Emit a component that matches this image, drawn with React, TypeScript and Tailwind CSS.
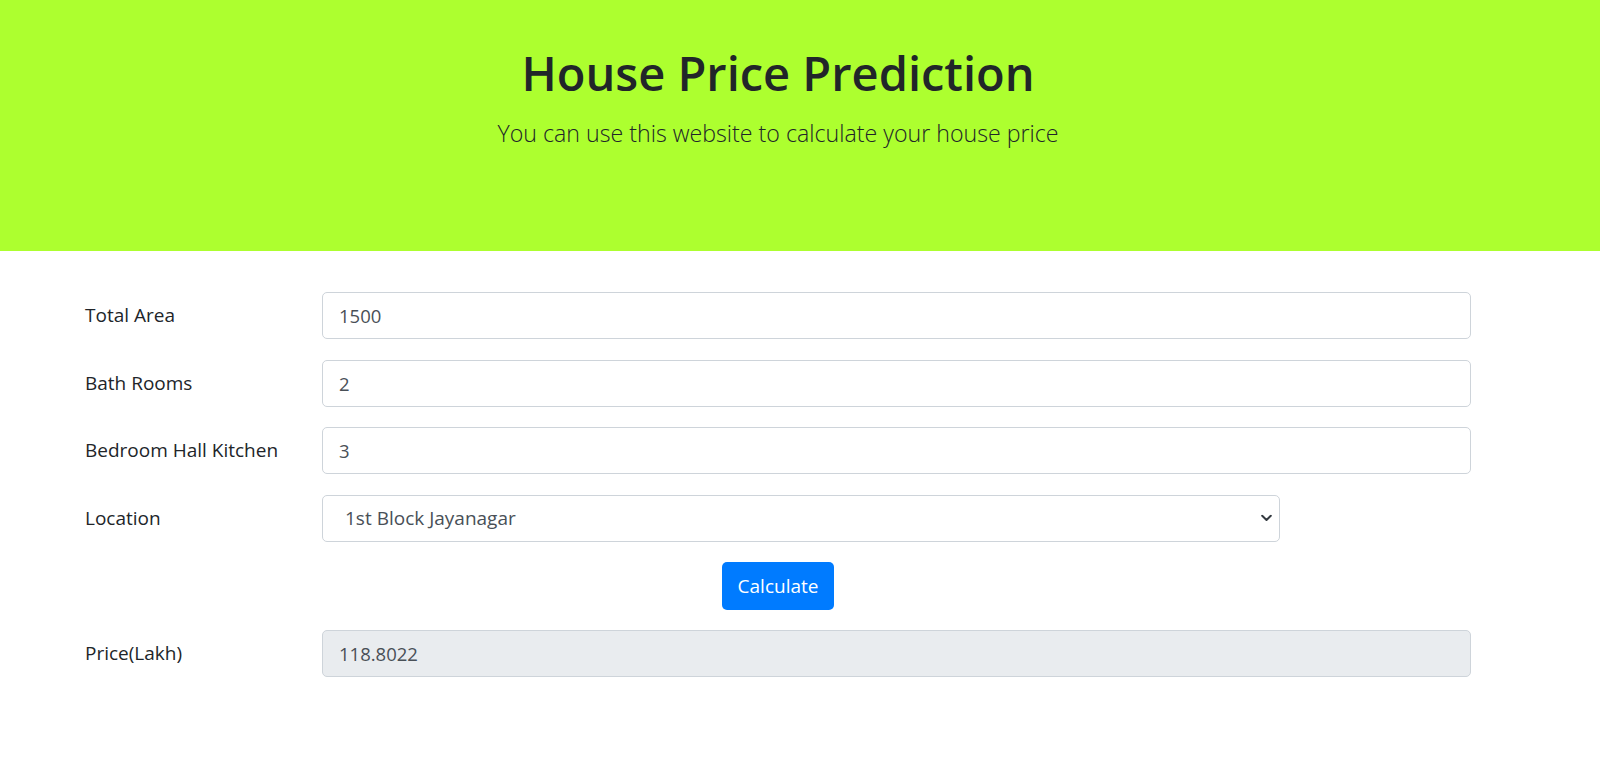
import { type ReactNode } from "react";

const font = { fontFamily: '"Open Sans", "Noto Sans", sans-serif' };

function Row({ label, children }: { label: string; children: ReactNode }) {
  return (
    <div className="flex items-center">
      <label className="w-[237px] shrink-0 pl-[85px] box-content text-[19px] text-[#212529]">
        {label}
      </label>
      {children}
    </div>
  );
}

function TextBox({ value, disabled }: { value: string; disabled?: boolean }) {
  return (
    <input
      readOnly
      value={value}
      className={
        "h-[47px] w-[1149px] rounded-[5px] border border-[#ced4da] px-[16px] text-[18.5px] text-[#495057] outline-none " +
        (disabled ? "bg-[#e9ecef]" : "bg-white")
      }
    />
  );
}

export default function App() {
  return (
    <div className="min-h-screen bg-white" style={font}>
      <header className="h-[251px] bg-[#adff2f] pt-[42px] pr-[44px] text-center text-[#212529]">
        <h1 className="text-[47px] font-semibold leading-[62px]">House Price Prediction</h1>
        <p className="mt-[11px] text-[23.2px] font-light leading-[37px]">
          You can use this website to calculate your house price
        </p>
      </header>

      <form className="mt-[41px] flex flex-col gap-[20.5px]">
        <Row label="Total Area">
          <TextBox value="1500" />
        </Row>
        <Row label="Bath Rooms">
          <TextBox value="2" />
        </Row>
        <Row label="Bedroom Hall Kitchen">
          <TextBox value="3" />
        </Row>
        <Row label="Location">
          <div className="relative flex h-[47px] w-[958px] items-center rounded-[5px] border border-[#ced4da] bg-white pl-[22px] text-[19px] text-[#495057]">
            1st Block Jayanagar
            <svg
              className="absolute right-[7px] top-1/2 -translate-y-1/2"
              width="11"
              height="7"
              viewBox="0 0 11 7"
              fill="none"
              stroke="#343a40"
              strokeWidth="2"
              strokeLinecap="round"
              strokeLinejoin="round"
            >
              <path d="M1.2 1.2 5.5 5.5l4.3-4.3" />
            </svg>
          </div>
        </Row>
        <div className="pl-[722px]">
          <button
            type="button"
            className="h-[48px] w-[112px] rounded-[5px] bg-[#007bff] text-[19px] text-white"
          >
            Calculate
          </button>
        </div>
        <div className="-mt-[1px]">
          <Row label="Price(Lakh)">
            <TextBox value="118.8022" disabled />
          </Row>
        </div>
      </form>
    </div>
  );
}
